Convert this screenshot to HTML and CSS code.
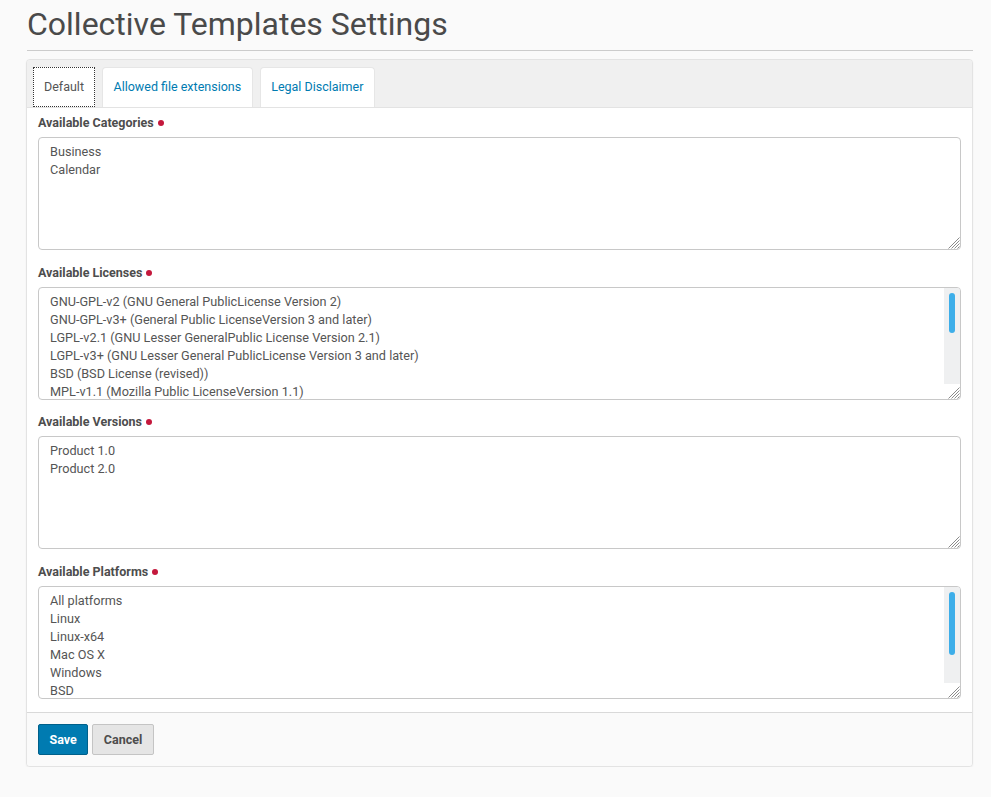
FILE: index.html
```html
<!DOCTYPE html>
<html lang="en">
<head>
<meta charset="utf-8">
<title>Collective Templates Settings</title>
<link rel="stylesheet" href="styles.css">
</head>
<body>
<div class="page">
  <h1 class="title">Collective Templates Settings</h1>
  <div class="panel">
    <div class="tabs">
      <a class="tab active">Default</a>
      <a class="tab">Allowed file extensions</a>
      <a class="tab">Legal Disclaimer</a>
    </div>
    <div class="form">
      <div class="field">
        <label class="label">Available Categories <span class="req"></span></label>
        <div class="ta-wrap">
          <textarea class="ta">Business
Calendar</textarea>
          <span class="grip"><svg width="13" height="13" viewBox="0 0 13 13"><path d="M12.5 1.5 L1.5 12.5 M12.5 4.5 L4.5 12.5 M12.5 7.5 L7.5 12.5 M12.5 10.5 L10.5 12.5" stroke="#8a8a8a" stroke-width="1" fill="none"/></svg></span>
        </div>
      </div>
      <div class="field">
        <label class="label">Available Licenses <span class="req"></span></label>
        <div class="ta-wrap">
          <textarea class="ta ta-scroll">GNU-GPL-v2 (GNU General PublicLicense Version 2)
GNU-GPL-v3+ (General Public LicenseVersion 3 and later)
LGPL-v2.1 (GNU Lesser GeneralPublic License Version 2.1)
LGPL-v3+ (GNU Lesser General PublicLicense Version 3 and later)
BSD (BSD License (revised))
MPL-v1.1 (Mozilla Public LicenseVersion 1.1)
MPL-v2.0 (Mozilla Public LicenseVersion 2.0)
CC-by-sa-v4 (Creative CommonsAttribution-ShareAlike 4.0 International)
CC-BY-SA-v3 (Creative CommonsAttribution-ShareAlike 3.0)
CC-BY-v4 (Creative Commons Attribution 4.0 International)
CC-BY-v3 (Creative CommonsAttribution 3.0)
Public Domain
OSI (Other OSI Approved)</textarea>
          <span class="sb"><span class="thumb" style="height: 40px"></span></span>
          <span class="grip"><svg width="13" height="13" viewBox="0 0 13 13"><path d="M12.5 1.5 L1.5 12.5 M12.5 4.5 L4.5 12.5 M12.5 7.5 L7.5 12.5 M12.5 10.5 L10.5 12.5" stroke="#8a8a8a" stroke-width="1" fill="none"/></svg></span>
        </div>
      </div>
      <div class="field">
        <label class="label">Available Versions <span class="req"></span></label>
        <div class="ta-wrap">
          <textarea class="ta">Product 1.0
Product 2.0</textarea>
          <span class="grip"><svg width="13" height="13" viewBox="0 0 13 13"><path d="M12.5 1.5 L1.5 12.5 M12.5 4.5 L4.5 12.5 M12.5 7.5 L7.5 12.5 M12.5 10.5 L10.5 12.5" stroke="#8a8a8a" stroke-width="1" fill="none"/></svg></span>
        </div>
      </div>
      <div class="field">
        <label class="label">Available Platforms <span class="req"></span></label>
        <div class="ta-wrap">
          <textarea class="ta ta-scroll">All platforms
Linux
Linux-x64
Mac OS X
Windows
BSD
UNIX (other)
Other</textarea>
          <span class="sb"><span class="thumb" style="height: 63px"></span></span>
          <span class="grip"><svg width="13" height="13" viewBox="0 0 13 13"><path d="M12.5 1.5 L1.5 12.5 M12.5 4.5 L4.5 12.5 M12.5 7.5 L7.5 12.5 M12.5 10.5 L10.5 12.5" stroke="#8a8a8a" stroke-width="1" fill="none"/></svg></span>
        </div>
      </div>
    </div>
    <div class="footer">
      <button class="btn btn-save">Save</button>
      <button class="btn btn-cancel">Cancel</button>
    </div>
  </div>
</div>
</body>
</html>
```

FILE: styles.css
```css
html, body {
  margin: 0;
  padding: 0;
  background: #fafafa;
  font-family: Roboto, "Liberation Sans", sans-serif;
  color: #4d4d4d;
}
.page {
  width: 947px;
  margin-left: 26px;
}
.title {
  margin: 0 0 8px 1px;
  padding: 5px 0 7px;
  font-size: 32px;
  font-weight: 400;
  line-height: 38px;
  color: #4a4a4a;
  border-bottom: 1px solid #cccccc;
}
.panel {
  background: #fafafa;
  border: 1px solid #e3e3e3;
  border-radius: 4px;
  box-shadow: 0 1px 2px rgba(0,0,0,0.05);
  overflow: hidden;
}
.tabs {
  display: flex;
  gap: 7px;
  padding: 7px 0 0 6px;
  background: #f0f0f0;
  border-bottom: 1px solid #e3e3e3;
  height: 40px;
}
.tab {
  display: flex;
  align-items: center;
  padding: 0 10.5px 2px;
  height: 40px;
  box-sizing: border-box;
  background: #ffffff;
  border: 1px solid #e6e6e6;
  border-bottom: none;
  border-radius: 4px 4px 0 0;
  font-size: 12.5px;
  color: #007bb1;
  cursor: pointer;
}
.tab.active {
  color: #555555;
  border: 1px dotted #333333;
  border-radius: 0;
  padding: 0 10px 1px;
  margin-bottom: -1px;
}
.form {
  background: #ffffff;
  padding: 7px 11px 13px;
  display: flex;
  flex-direction: column;
  gap: 14.5px;
  border-bottom: 1px solid #d9d9d9;
}
.field {
  display: flex;
  flex-direction: column;
  gap: 6px;
}
.label {
  font-size: 12.5px;
  font-weight: 700;
  color: #4d4d4d;
  line-height: 16px;
  display: flex;
  align-items: center;
  gap: 4px;
}
.req {
  display: inline-block;
  width: 6px;
  height: 6px;
  border-radius: 50%;
  background: #c4183c;
}
.ta-wrap {
  position: relative;
}
.ta {
  display: block;
  box-sizing: border-box;
  width: 100%;
  height: 113px;
  margin: 0;
  padding: 5px 11px;
  border: 1px solid #c8c8c8;
  border-radius: 4px;
  font-family: Roboto, "Liberation Sans", sans-serif;
  font-size: 12.68px;
  line-height: 18px;
  color: #555555;
  background: #ffffff;
  resize: none;
  overflow: hidden;
}
.ta-scroll {
  padding-right: 28px;
}
.sb {
  position: absolute;
  top: 1px;
  right: 1px;
  bottom: 16px;
  width: 16px;
  background: #eff0f1;
  box-sizing: border-box;
  padding: 5px 5px 0;
  border-top-right-radius: 3px;
}
.thumb {
  display: block;
  width: 6px;
  border-radius: 3px;
  background: #3daee9;
}
.grip {
  position: absolute;
  right: 1px;
  bottom: 1px;
  width: 13px;
  height: 13px;
  line-height: 0;
}
.footer {
  display: flex;
  gap: 4px;
  padding: 11px;
  background: #fafafa;
}
.btn {
  height: 31px;
  padding: 0 10.5px;
  font-family: Roboto, "Liberation Sans", sans-serif;
  font-size: 12.5px;
  font-weight: 700;
  border-radius: 2px;
  cursor: pointer;
}
.btn-save {
  background: #007bb1;
  border: 1px solid #00608a;
  color: #ffffff;
}
.btn-cancel {
  background: #e5e5e5;
  border: 1px solid #c4c4c4;
  color: #4d4d4d;
}
```
